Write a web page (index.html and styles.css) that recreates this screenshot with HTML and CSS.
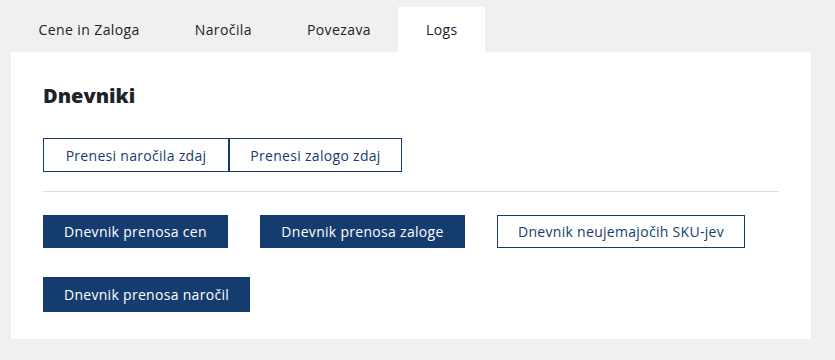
FILE: index.html
```html
<!DOCTYPE html>
<html lang="sl">
<head>
    <meta charset="UTF-8">
    <meta name="viewport" content="width=device-width, initial-scale=1.0">
    <title>Dnevniki</title>
    <link rel="stylesheet" href="styles.css">
</head>
<body>
    <div class="wrap">
        <nav class="tabs">
            <a href="#" class="tab">Cene in Zaloga</a>
            <a href="#" class="tab">Naročila</a>
            <a href="#" class="tab">Povezava</a>
            <a href="#" class="tab active">Logs</a>
        </nav>

        <div class="panel">
            <h2>Dnevniki</h2>

            <div class="btn-group">
                <button class="btn btn-outline">Prenesi naročila zdaj</button>
                <button class="btn btn-outline">Prenesi zalogo zdaj</button>
            </div>

            <hr>

            <div class="log-buttons">
                <button class="btn btn-primary">Dnevnik prenosa cen</button>
                <button class="btn btn-primary">Dnevnik prenosa zaloge</button>
                <button class="btn btn-outline">Dnevnik neujemajočih SKU-jev</button>
                <button class="btn btn-primary">Dnevnik prenosa naročil</button>
            </div>
        </div>
    </div>
</body>
</html>
```

FILE: styles.css
```css
body {
    font-family: "Open Sans", Arial, sans-serif;
    background-color: #f0f0f0;
    color: #222;
    margin: 0;
    padding: 0;
}

.wrap {
    width: 800px;
    padding: 7px 0 0 11px;
}

.tabs {
    display: flex;
}

.tab {
    display: block;
    height: 45px;
    line-height: 45px;
    padding: 0 27.5px;
    font-size: 14px;
    letter-spacing: 0.4px;
    color: #222;
    text-decoration: none;
}

.tab.active {
    background-color: #fff;
}

.panel {
    background-color: #fff;
    padding: 32px 32px 27px;
}

.panel h2 {
    margin: 0 0 30px;
    font-size: 20px;
    font-weight: 800;
    line-height: 24px;
    color: #1f2328;
}

.btn {
    font-family: inherit;
    font-size: 14px;
    letter-spacing: 0.3px;
    white-space: nowrap;
    height: 34px;
    padding: 0 10px;
    border-radius: 0;
    cursor: pointer;
}

.btn-outline {
    background-color: #fff;
    color: #153c6e;
    border: 1px solid #153c6e;
}

.btn-primary {
    background-color: #153c6e;
    color: #fff;
    border: 1px solid #153c6e;
    font-weight: 500;
}

.btn-group {
    display: flex;
}

.btn-group .btn {
    width: 186px;
}

.btn-group .btn + .btn {
    width: 173px;
}

hr {
    border: none;
    border-top: 1px solid #dedede;
    margin: 19px 0 23px;
}

.log-buttons {
    display: flex;
    flex-wrap: wrap;
    column-gap: 32px;
    row-gap: 29px;
    width: 720px;
}

.log-buttons .btn:nth-child(1) { width: 185px; height: 33px; }
.log-buttons .btn:nth-child(2) { width: 205px; height: 33px; }
.log-buttons .btn:nth-child(3) { width: 248px; height: 33px; }
.log-buttons .btn:nth-child(4) { width: 207px; height: 35px; }
```
